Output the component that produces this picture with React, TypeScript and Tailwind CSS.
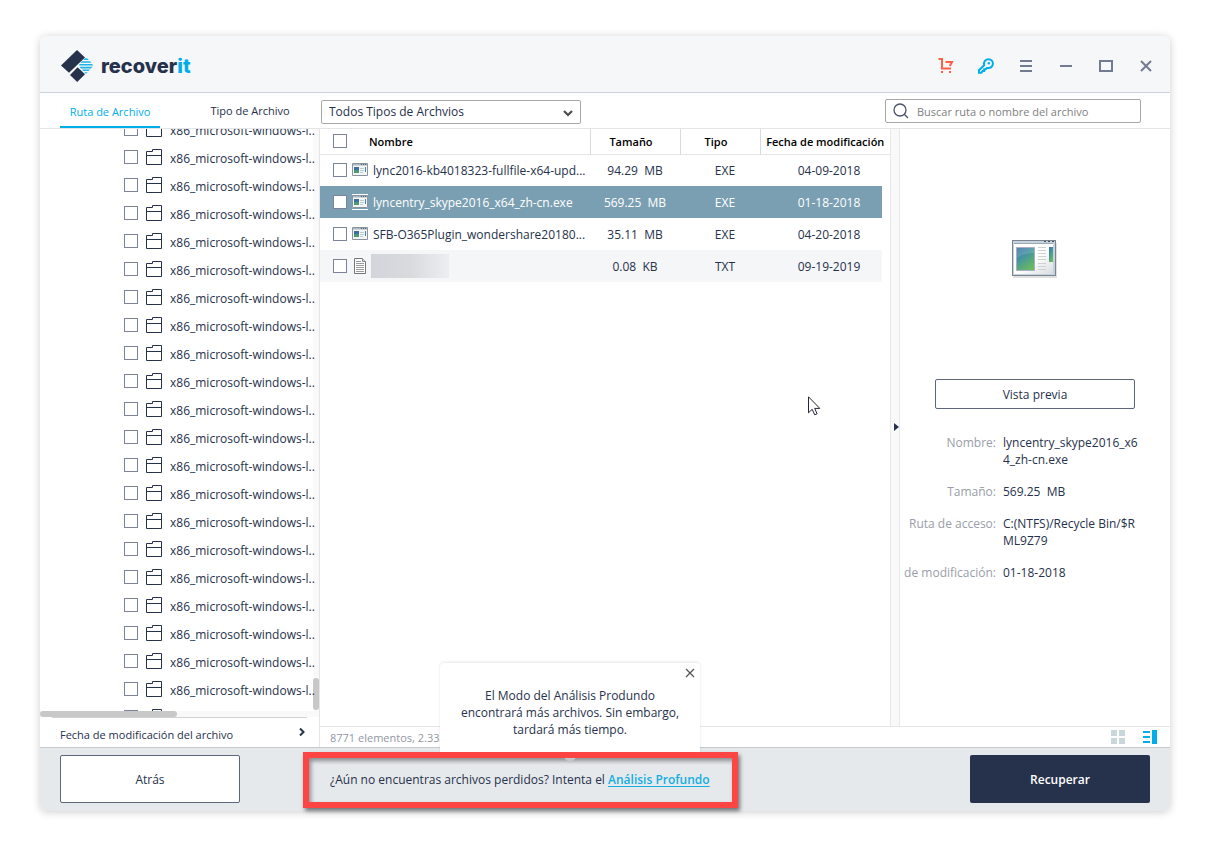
import React from "react";

const treeRows = Array.from({ length: 22 }, (_, i) => ({
  id: i,
  name: i < 21 ? "x86_microsoft-windows-l.." : "",
}));

type FileRow = {
  id: string;
  name: string;
  size: string;
  type: string;
  date: string;
  selected?: boolean;
};

const files: FileRow[] = [
  { id: "f1", name: "lync2016-kb4018323-fullfile-x64-upd...", size: "94.29  MB", type: "EXE", date: "04-09-2018" },
  { id: "f2", name: "lyncentry_skype2016_x64_zh-cn.exe", size: "569.25  MB", type: "EXE", date: "01-18-2018", selected: true },
  { id: "f3", name: "SFB-O365Plugin_wondershare20180...", size: "35.11  MB", type: "EXE", date: "04-20-2018" },
  { id: "f4", name: "", size: "0.08  KB", type: "TXT", date: "09-19-2019" },
];

const details = [
  { label: "Nombre:", value: "lyncentry_skype2016_x64_zh-cn.exe" },
  { label: "Tamaño:", value: "569.25  MB" },
  { label: "Ruta de acceso:", value: "C:(NTFS)/Recycle Bin/$RML9Z79" },
  { label: "de modificación:", value: "01-18-2018" },
];

function Check({ label }: { label: string }) {
  return (
    <input
      type="checkbox"
      aria-label={label}
      className="block size-3.5 shrink-0 appearance-none border border-[#7c8398] bg-white checked:bg-[#26314b]"
    />
  );
}

function Logo() {
  return (
    <div className="flex items-center gap-2">
      <svg width="32" height="32" viewBox="0 0 32 32" aria-hidden="true">
        <path d="M16 0 24 7.600 8 22.800 0 15.500Z" fill="#26314b" />
        <path d="M16.600 17.200 24 24.200 16.200 32 9 25Z" fill="#26314b" />
        <g fill="#1db4e8">
          <path d="M24 8.200h2l1.800 1.800h-5.600z" />
          <path d="M20.800 11.200h8.200l1.400 1.500H19.300z" />
          <path d="M18.500 14h12.700l.8 1.600H18z" />
          <path d="M18.500 16.800h13l-1.600 1.600H20z" />
          <path d="M21 19.600h8l-1.400 1.500h-5.200z" />
          <path d="M23.200 22.200h3.600L25 23.800z" />
        </g>
      </svg>
      <span className="font-['Inter',sans-serif] text-xl leading-8 font-extrabold text-[#26314b]">
        recover<span className="text-[#00aeea]">it</span>
      </span>
    </div>
  );
}

function FolderIcon() {
  return (
    <svg width="16" height="16" viewBox="0 0 16 16" fill="none" stroke="#26314b" aria-hidden="true" className="shrink-0">
      <path d="M.5 2.5h6v-2h9v15H.5z" />
      <path d="M.5 6.5h15" />
    </svg>
  );
}

function ExeIcon({ selected }: { selected?: boolean }) {
  return (
    <svg width="16" height="16" viewBox="0 0 16 16" aria-hidden="true" className="shrink-0">
      {selected && <path d="M0 0h16v16H0z" fill="#fff" />}
      {selected && <path d="M0 1h16v1H0zM0 14h16v1H0z" fill="#7b9fb2" />}
      <path d="M.5 1.5h15v12H.5z" fill="#f4f5f6" stroke="#8b949c" />
      <path d="M1 2h14v1.5H1z" fill="#aab6c0" />
      <path d="M9 2h1v1H9zM11 2h1v1h-1zM13 2h1v1h-1z" fill="#4f6377" />
      <path d="M2 5h5v3H2z" fill="#3c6f9c" />
      <path d="M2 8h5v3H2z" fill="#4b9a73" />
      <path d="M8 6.5h4M8 8.500h4M8 10.500h3" stroke="#c3c8cc" />
      <path d="M13 5h1v5h-1z" fill="#4388a0" />
    </svg>
  );
}

function TxtIcon() {
  return (
    <svg width="16" height="16" viewBox="0 0 16 16" aria-hidden="true" className="shrink-0">
      <path d="M2.5.5h8l3 3v12h-11z" fill="#fff" stroke="#777" />
      <path d="M10.5.5v3h3" fill="#ddd" stroke="#888" />
      <path d="M4 3.5h5M4 5.5h8M4 7.5h8M4 9.5h8M4 11.5h8M4 13.5h8" stroke="#9a9a9a" />
    </svg>
  );
}

function PreviewIcon() {
  return (
    <svg width="48" height="40" viewBox="0 0 48 40" aria-hidden="true">
      <defs>
        <linearGradient id="screen" x1="0" y1="0" x2=".6" y2="1">
          <stop offset="0" stopColor="#3a6ea5" />
          <stop offset=".45" stopColor="#4594a0" />
          <stop offset="1" stopColor="#68b95f" />
        </linearGradient>
        <linearGradient id="page" x1="0" y1="0" x2="1" y2="1">
          <stop offset=".5" stopColor="#fff" />
          <stop offset="1" stopColor="#d9dcdf" />
        </linearGradient>
      </defs>
      <path d="M3 3h44v35H3z" fill="#000" opacity=".12" />
      <path d="M2 0h44v36H2z" fill="#7b838f" />
      <path d="M3 1h42v34H3z" fill="#c5d3de" />
      <path d="M4 4h39v30H4z" fill="url(#page)" />
      <path d="M4 3h39v1H4z" fill="#9fa9b2" />
      <path d="M34 1h2v1h-2zM38 1h2v1h-2zM42 1h2v1h-2z" fill="#43505e" />
      <path d="M6.500 7.500h18v23h-18z" fill="url(#screen)" stroke="#a9adc6" />
      <path d="M7 18q7-5 17-5V8H7z" fill="#fff" opacity=".14" />
      <path d="M28 7.500h8M28 10.500h8M28 13.500h8M28 16.500h8M28 19.500h8M28 23.500h8M28 26.500h8M28 29.500h8" stroke="#cfd1d2" />
      <path d="M39 7h4v15h-4z" fill="url(#screen)" />
    </svg>
  );
}

const windowButton = "flex size-10 items-center justify-center text-[#737b90]";

function TitleBar() {
  return (
    <header className="flex h-[57px] shrink-0 items-center justify-between rounded-t-md border-b border-[#ccd0da] bg-[#f6f7f9] pt-1 pr-1 pl-[21px]">
      <Logo />
      <div className="flex items-center">
        <button aria-label="Comprar" className={windowButton}>
          <svg width="16" height="16" viewBox="0 0 16 16" fill="none" stroke="#ff5f45" strokeWidth="2" aria-hidden="true">
            <path d="M.5 1H4v9.500h9" />
            <path d="M7.500 4h6.500l-2.200 4" />
            <path d="M3 14h2M11 14h2" />
          </svg>
        </button>
        <button aria-label="Registrar" className={windowButton}>
          <svg width="16" height="16" viewBox="0 0 16 16" fill="none" stroke="#00aeea" strokeWidth="2" aria-hidden="true">
            <path d="M6.200 7.200C5.200 3.600 7.600 1.200 10.500 1.200c2.600 0 4.400 1.900 4.400 4.400 0 2.900-2.300 5.100-5.900 4.300L7.800 11.200H6.200v1.700H4.600L3.400 14.800H1v-2.600z" />
            <circle cx="10.800" cy="5.300" r="1.200" fill="#00aeea" stroke="none" />
          </svg>
        </button>
        <button aria-label="Menú" className={windowButton}>
          <svg width="12" height="12" viewBox="0 0 12 12" fill="none" stroke="currentColor" strokeWidth="2" aria-hidden="true">
            <path d="M0 1h12M0 6h12M0 11h12" />
          </svg>
        </button>
        <button aria-label="Minimizar" className={windowButton}>
          <svg width="12" height="12" viewBox="0 0 12 12" fill="none" stroke="currentColor" strokeWidth="2" aria-hidden="true">
            <path d="M0 6h12" />
          </svg>
        </button>
        <button aria-label="Maximizar" className={windowButton}>
          <svg width="14" height="12" viewBox="0 0 14 12" fill="none" stroke="currentColor" strokeWidth="2" aria-hidden="true">
            <path d="M1 1h12v10H1z" />
          </svg>
        </button>
        <button aria-label="Cerrar" className={windowButton}>
          <svg width="12" height="12" viewBox="0 0 12 12" fill="none" stroke="currentColor" strokeWidth="2" aria-hidden="true">
            <path d="M1 1l10 10M11 1 1 11" />
          </svg>
        </button>
      </div>
    </header>
  );
}

function Toolbar() {
  return (
    <div className="flex h-9 shrink-0 items-center border-b border-[#e4e5e7] pr-[29px]">
      <div role="tablist" className="flex w-[281px] shrink-0 self-stretch pl-5 text-[11px]">
        <button role="tab" aria-selected="true" className="w-[100px] border-b-2 border-[#00aeea] pt-1.5 text-[#00aeea]">
          Ruta de Archivo
        </button>
        <button role="tab" aria-selected="false" className="ml-10 w-[100px] pt-1 pb-0.5">
          Tipo de Archivo
        </button>
      </div>
      <div className="relative mt-0.5 w-[260px]">
        <select
          aria-label="Tipos de archivo"
          className="block h-6 w-full appearance-none rounded-xs border border-[#a8a8a8] bg-white pl-[7px]"
        >
          <option>Todos Tipos de Archvios</option>
        </select>
        <svg width="10" height="7" viewBox="0 0 10 7" fill="none" stroke="#4d4d4d" strokeWidth="2.200" aria-hidden="true" className="pointer-events-none absolute top-2.5 right-2">
          <path d="M1 1l4 4 4-4" />
        </svg>
      </div>
      <label className="mt-px ml-auto flex h-6 w-64 items-center gap-2 rounded-xs border border-[#a8a8a8] bg-white px-[7px]">
        <svg width="16" height="16" viewBox="0 0 16 16" fill="none" stroke="#4a5268" strokeWidth="1.300" aria-hidden="true" className="shrink-0">
          <circle cx="7" cy="7" r="6" />
          <path d="M11.300 11.300 15 15" />
        </svg>
        <input
          type="search"
          aria-label="Buscar"
          placeholder="Buscar ruta o nombre del archivo"
          className="min-w-0 flex-1 bg-transparent pt-0.5 text-[11px] outline-none placeholder:text-[#7f7f7f]"
        />
      </label>
    </div>
  );
}

function Sidebar() {
  return (
    <aside className="flex w-[280px] shrink-0 flex-col border-r border-[#e4e5e7]">
      <div className="relative flex min-h-0 flex-1 basis-0 flex-col">
        <div className="absolute inset-y-0 right-0 flex w-1.5 flex-col justify-end bg-[#f9f9f9] pb-[7px]">
          <div className="h-8 rounded-full bg-[#c8c8c8]" />
        </div>
        <ul className="relative min-h-0 flex-1 basis-0 overflow-hidden">
          {treeRows.map((row) => (
            <li key={row.id} className="flex h-7 items-center gap-2 pl-[84px] whitespace-nowrap first:-mt-3.5">
              <Check label={row.name || "Carpeta"} />
              <FolderIcon />
              <span className="pt-1">{row.name}</span>
            </li>
          ))}
        </ul>
        <div className="mr-1.5 h-1.5 bg-[#f9f9f9]">
          <div className="h-full w-1/2 rounded-full bg-[#c8c8c8]" />
        </div>
      </div>
      <button className="mr-3 ml-3 flex h-[30px] items-center justify-between border-t border-[#d0d2d4] pt-1.5 pr-0.5 pl-2">
        <span className="text-[11px]">Fecha de modificación del archivo</span>
        <svg width="6" height="8" viewBox="0 0 6 8" fill="none" stroke="#26314b" strokeWidth="2" aria-hidden="true" className="mb-2">
          <path d="M1 .5 4.500 4 1 7.500" />
        </svg>
      </button>
    </aside>
  );
}

function FileTable() {
  return (
    <div className="min-w-0 flex-1">
      <table className="w-full table-fixed border-collapse">
        <colgroup>
          <col />
          <col className="w-[90px]" />
          <col className="w-20" />
          <col className="w-[122px]" />
          <col className="w-2" />
        </colgroup>
        <thead className="text-[11px] text-black">
          <tr className="h-[25px] border-b border-[#e4e5e7]">
            <th className="border-r border-[#d8dadd] pl-[13px] text-left font-semibold">
              <div className="flex items-center gap-[22px]">
                <Check label="Seleccionar todo" />
                <span className="pt-0.5">Nombre</span>
              </div>
            </th>
            <th className="border-r border-[#d8dadd] pt-0.5 pr-2 font-semibold">Tamaño</th>
            <th className="border-r border-[#d8dadd] pt-0.5 pr-2 font-semibold">Tipo</th>
            <th colSpan={2} className="pt-0.5 font-semibold whitespace-nowrap">
              Fecha de modificación
            </th>
          </tr>
        </thead>
        <tbody>
          {files.map((f) => (
            <tr
              key={f.id}
              className={
                f.selected ? "h-8 bg-[#7b9fb2] text-white" : f.name ? "h-8" : "h-8 bg-[#f5f6f8]"
              }
            >
              <td className="pl-[13px]">
                <div className="flex items-center whitespace-nowrap">
                  <Check label={f.name || "TXT"} />
                  <span className="ml-[5px]">{f.type === "EXE" ? <ExeIcon selected={f.selected} /> : <TxtIcon />}</span>
                  {f.name ? (
                    <span className="ml-[5px] pt-0.5">{f.name}</span>
                  ) : (
                    <span className="-my-1 ml-[3px] h-6 w-[78px] bg-linear-to-r from-[#d2d5da] via-[#d8dade] to-[#eceef1]" />
                  )}
                </div>
              </td>
              <td className="pt-0.5 text-center whitespace-pre">{f.size}</td>
              <td className="pt-0.5 pl-2.5 text-center">{f.type}</td>
              <td className="pt-0.5 pl-4 text-center">{f.date}</td>
              <td className="bg-white" />
            </tr>
          ))}
        </tbody>
      </table>
    </div>
  );
}

function PreviewPanel() {
  return (
    <section className="flex w-[270px] shrink-0 flex-col items-center">
      <div className="flex h-[250px] items-center pt-3 pr-0.5">
        <PreviewIcon />
      </div>
      <button className="h-[30px] w-[200px] rounded-xs border border-[#5d667b] bg-white pt-0.5">Vista previa</button>
      <dl className="mt-[25px] grid w-full grid-cols-[96px_1fr] gap-x-[7px] gap-y-[15px] pr-7 leading-[17px]">
        {details.map((d) => (
          <React.Fragment key={d.label}>
            <dt className="text-right whitespace-nowrap text-[#999ea8]">{d.label}</dt>
            <dd className="break-all whitespace-pre-wrap">{d.value}</dd>
          </React.Fragment>
        ))}
      </dl>
    </section>
  );
}

function StatusBar() {
  return (
    <div className="flex h-[21px] shrink-0 items-center justify-between border-t border-[#e4e5e7] pr-[13px] pl-2.5">
      <span className="pt-0.5 text-[11px] text-[#9297a3]">8771 elementos, 2.33</span>
      <div className="flex gap-[18px]">
        <button aria-label="Cuadrícula">
          <svg width="14" height="14" viewBox="0 0 14 14" fill="#c9d6da" aria-hidden="true">
            <path d="M0 0h6v6H0zM8 0h6v6H8zM0 8h6v6H0zM8 8h6v6H8z" />
          </svg>
        </button>
        <button aria-label="Detalles">
          <svg width="14" height="14" viewBox="0 0 14 14" fill="#00aeea" aria-hidden="true">
            <path d="M0 1h7v2H0zM0 6h7v2H0zM0 11h7v2H0zM9 0h5v14H9z" />
          </svg>
        </button>
      </div>
    </div>
  );
}

function Tooltip() {
  return (
    <div
      role="tooltip"
      className="absolute bottom-[calc(100%+6px)] left-[131px] h-[89px] w-[260px] rounded-t-sm bg-white px-4 pt-6 text-center leading-[17px] shadow-[0_-1px_3px_rgba(0,0,0,0.1)]"
    >
      <button aria-label="Cerrar aviso" className="absolute top-1 right-1 p-px">
        <svg width="10" height="10" viewBox="0 0 10 10" fill="none" stroke="#555" strokeWidth="1.300" aria-hidden="true">
          <path d="M1 1l8 8M9 1 1 9" />
        </svg>
      </button>
      El Modo del Análisis Produndo encontrará más archivos. Sin embargo, tardará más tiempo.
    </div>
  );
}

function Footer() {
  return (
    <footer className="flex h-16 shrink-0 items-start justify-between rounded-b-md border-t border-[#c6c9cd] bg-[#e6e9ec] px-5">
      <div className="flex">
        <button className="mt-[7px] h-12 w-[180px] rounded-xs border border-[#5d667b] bg-white pt-0.5">Atrás</button>
        <div className="relative mt-1 ml-[63px] flex h-14 w-[435px] items-center border-6 border-[#ff4444] pl-[21px] shadow-[2px_3px_4px_rgba(0,0,0,0.5),inset_2px_3px_4px_rgba(0,0,0,0.4)]">
          <Tooltip />
          <svg width="12" height="5" viewBox="0 0 12 5" fill="#c3c6c9" aria-hidden="true" className="absolute top-0 left-[255px]">
            <path d="M0 0h12L6 5z" />
          </svg>
          <p className="whitespace-nowrap">
            ¿Aún no encuentras archivos perdidos? Intenta el{" "}
            <a href="#profundo" className="font-semibold text-[#13aee2] underline underline-offset-2">
              Análisis Profundo
            </a>
          </p>
        </div>
      </div>
      <button className="mt-[7px] h-12 w-[180px] rounded-xs bg-[#26314b] pt-0.5 font-semibold text-white">Recuperar</button>
    </footer>
  );
}

export default function App() {
  return (
    <div className="flex min-h-screen bg-white px-10 pt-9 pb-11 font-['Open_Sans','Noto_Sans',sans-serif] text-xs text-[#26314b]">
      <main className="relative flex min-w-0 flex-1 flex-col rounded-md bg-white shadow-[0_1px_8px_rgba(0,0,0,0.2)]">
        <TitleBar />
        <Toolbar />
        <div className="flex min-h-0 flex-1">
          <Sidebar />
          <div className="flex min-w-0 flex-1 flex-col">
            <div className="flex min-h-0 flex-1">
              <FileTable />
              <button aria-label="Ocultar panel" className="flex w-2.5 shrink-0 items-center justify-end border-x border-[#e8e9ea] bg-[#f9f9f9] pb-0.5">
                <svg width="5" height="8" viewBox="0 0 5 8" fill="#26314b" aria-hidden="true">
                  <path d="M0 0l5 4-5 4z" />
                </svg>
              </button>
              <PreviewPanel />
            </div>
            <StatusBar />
          </div>
        </div>
        <Footer />
        <svg width="13" height="20" viewBox="0 0 13 20" fill="#fff" stroke="#26263a" aria-hidden="true" className="pointer-events-none absolute top-[360px] left-[768px]">
          <path d="M.5.8v16l3.700-3.500 2.500 5.500 2.400-1-2.400-5.400h5.100z" />
        </svg>
      </main>
    </div>
  );
}
